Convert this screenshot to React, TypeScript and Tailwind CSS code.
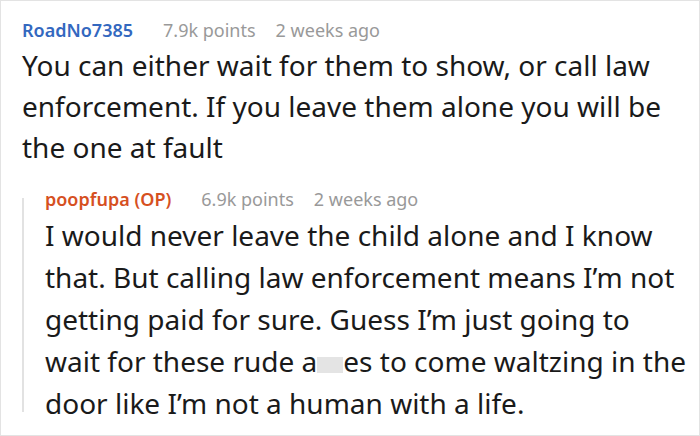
export default function App() {
  return (
    <div className="w-[700px] h-[436px] bg-white border border-[#e3e3e3] overflow-hidden font-['Noto_Sans',sans-serif]">
      <div className="pl-[21px] pt-[14px]">
        <div className="flex items-baseline gap-[30px] text-[18px] leading-[30px]">
          <span className="font-semibold text-[#3368bf]">RoadNo7385</span>
          <span className="flex gap-[20px] text-[#999999]">
            <span>7.9k points</span>
            <span>2 weeks ago</span>
          </span>
        </div>
        <p className="text-[28px] leading-[41px] text-[#1a1a1a] pr-4">
          You can either wait for them to show, or call law enforcement. If you leave them alone you will be the one at fault
        </p>
      </div>
      <div className="flex ml-[21px] mt-[16px]">
        <div className="w-[2px] bg-[#e2e2e2] mt-[14px] mb-[12px] shrink-0" />
        <div className="pl-[21px] pr-[12px]">
          <div className="flex items-baseline gap-[30px] text-[18px] leading-[30px]">
            <span className="font-semibold text-[#d6501f]">poopfupa (OP)</span>
            <span className="flex gap-[20px] text-[#999999]">
              <span>6.9k points</span>
              <span>2 weeks ago</span>
            </span>
          </div>
          <p className="text-[28px] leading-[42px] text-[#1a1a1a]">
            I would never leave the child alone and I know that. But calling law enforcement means I’m not getting paid for sure. Guess I’m just going to wait for these rude a
            <span className="inline-block w-[26px] h-[16px] bg-[#e4e4e4] align-[-1px]" />
            es to come waltzing in the door like I’m not a human with a life.
          </p>
        </div>
      </div>
    </div>
  );
}
